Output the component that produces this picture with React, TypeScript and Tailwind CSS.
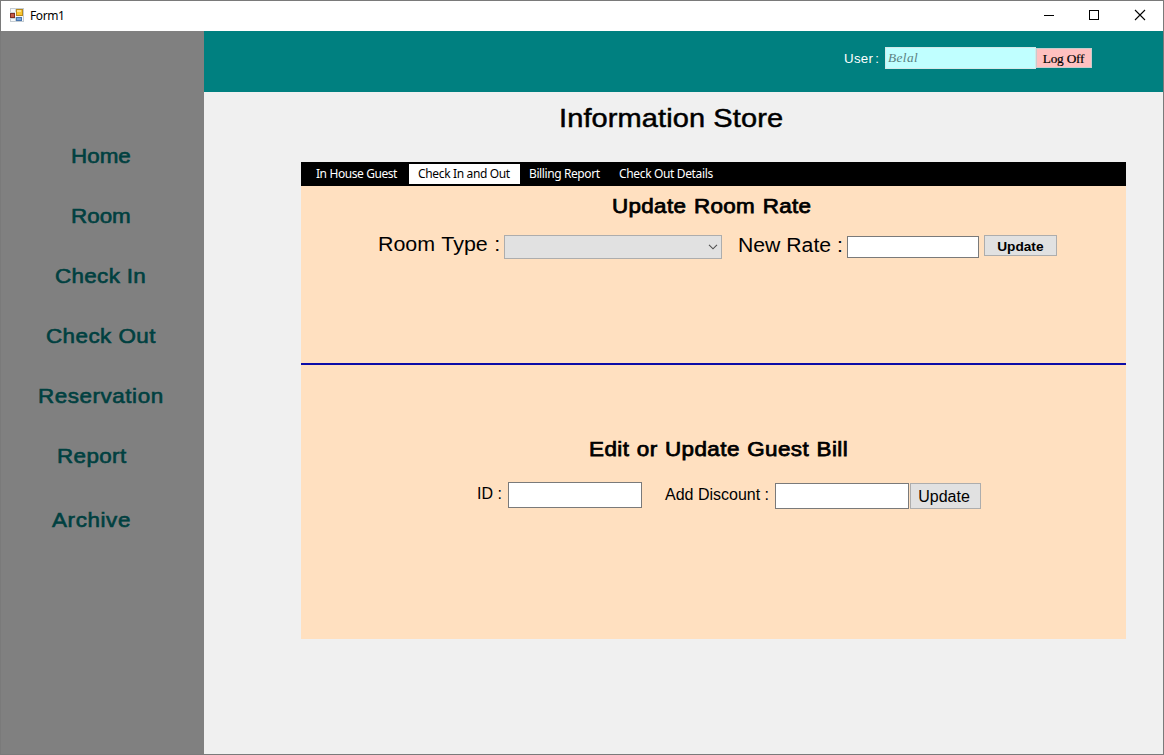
const nav: { label: string; cls: string }[] = [
  { label: "Home", cls: "ml-[70px] tracking-[0px]" },
  { label: "Room", cls: "ml-[70px] tracking-[0px]" },
  { label: "Check In", cls: "ml-[54px] tracking-[0.3px]" },
  { label: "Check Out", cls: "ml-[45px] tracking-[0.4px]" },
  { label: "Reservation", cls: "ml-[37px] tracking-[0.5px]" },
  { label: "Report", cls: "ml-[56px] tracking-[0.35px]" },
  { label: "Archive", cls: "ml-[51px] tracking-[0.55px]" },
];

function AppIcon() {
  return (
    <svg className="mt-[7px]" width="14" height="14" viewBox="0 0 14 14" shapeRendering="crispEdges">
      <rect x="0.5" y="0.5" width="13" height="13" fill="#f6f8fa" stroke="#c4ccd2" />
      <path d="M5.5 9V14M0 4.5H5M0 10.5H5M5.5 0V4" stroke="#ccd4da" />
      <rect x="0.5" y="5.5" width="4" height="4" fill="#c65a48" stroke="#7d2d24" />
      <rect x="6.5" y="1.5" width="6" height="6" fill="#f9c62f" stroke="#b98a1c" />
      <rect x="7" y="2" width="4" height="2" fill="#fde08a" />
      <rect x="6.5" y="9.5" width="5" height="3" fill="#7aa6d8" stroke="#4a76ae" />
    </svg>
  );
}

function TitleBar() {
  return (
    <div className="flex h-[30px] shrink-0 items-start bg-white pl-[9px]">
      <AppIcon />
      <span className="ml-[6px] mt-[7px] font-['Noto_Sans',sans-serif] text-[12px] leading-4 tracking-[-0.4px]">Form1</span>
      <svg className="ml-auto" width="138" height="30" viewBox="0 0 138 30" fill="none" stroke="#000">
        <path d="M19 14.5H29M64.5 9.5H73.5V18.5H64.5Z" shapeRendering="crispEdges" />
        <path d="M110 9L120 19M120 9L110 19" strokeWidth="1.1" />
      </svg>
    </div>
  );
}

function Sidebar() {
  return (
    <nav className="flex w-[203px] shrink-0 flex-col bg-[#808080] pt-[113px] text-[20px] leading-6 text-[#004040] [-webkit-text-stroke:0.6px_#004040]">
      {nav.map((n) => (
        <a key={n.label} className={"h-[60px] origin-left scale-x-[1.12] self-start whitespace-nowrap last:pt-1 " + n.cls}>
          {n.label}
        </a>
      ))}
    </nav>
  );
}

function Header() {
  return (
    <header className="flex h-[61px] items-start bg-[#008080] pl-[640px] pt-4">
      <span className="mt-1 w-[41px] whitespace-pre text-[13.3px] leading-4 tracking-[0.3px] text-white [word-spacing:-2px]">User :</span>
      <div className="h-[22px] w-[151px] border border-[#d5e8e8] bg-[#c0ffff] pl-[2px] font-['Liberation_Serif',serif] text-[13.3px] italic leading-[20px] tracking-[0.4px] text-[#5c7f7f]">
        Belal
      </div>
      <button className="mt-px h-5 w-14 border border-[#c8cccc] bg-[#ffc0c0] pr-px font-['Liberation_Serif',serif] text-[13.3px] leading-[19px] tracking-[-0.2px] [-webkit-text-stroke:0.2px_#000]">
        Log Off
      </button>
    </header>
  );
}

function Tabs() {
  return (
    <div className="flex h-6 items-center whitespace-nowrap bg-black pl-[6px] font-['Noto_Sans',sans-serif] text-[12px] leading-5 text-white">
      <span className="w-[102px] pl-[9px] tracking-[-0.5px] [word-spacing:0.5px]">In House Guest</span>
      <span className="h-5 w-[111px] bg-white pl-[9px] tracking-[-0.35px] text-black">Check In and Out</span>
      <span className="w-[90px] pl-[9px] tracking-[-0.4px]">Billing Report</span>
      <span className="pl-[9px] tracking-[-0.35px]">Check Out Details</span>
    </div>
  );
}

function RoomRate() {
  return (
    <section className="h-[179px] border-b-2 border-[#0c0ca8] pt-2">
      <h2 className="ml-[311px] w-fit origin-left scale-x-[1.12] text-[20px] leading-6 tracking-[0.3px] [-webkit-text-stroke:0.75px_#000] [word-spacing:1px]">
        Update Room Rate
      </h2>
      <div className="flex items-start whitespace-nowrap pl-[77px] pt-[14px] text-[20px] leading-6">
        <label className="w-[126px] origin-left scale-x-[1.07] [word-spacing:0.6px]">Room Type :</label>
        <div className="mt-[3px] flex h-6 w-[218px] items-center justify-end border border-[#adadad] bg-[#e1e1e1] pr-[3px]">
          <svg width="10" height="6" viewBox="0 0 10 6" fill="none" stroke="#505050" strokeWidth="1.1">
            <path d="M1 0.8L5 4.8L9 0.8" />
          </svg>
        </div>
        <label className="ml-4 mt-px w-[109px] origin-left scale-x-[1.06]">New Rate :</label>
        <input className="mt-1 h-[22px] w-[132px] border border-[#7a7a7a] bg-white" />
        <button className="ml-[5px] mt-[3px] flex h-[21px] w-[73px] justify-center border border-[#adadad] bg-[#e1e1e1] text-[12px] font-bold leading-[22px]">
          <span className="scale-x-[1.14]">Update</span>
        </button>
      </div>
    </section>
  );
}

function GuestBill() {
  return (
    <section className="pt-[72px]">
      <h2 className="ml-[288px] w-fit origin-left scale-x-[1.12] text-[20px] leading-6 tracking-[0.4px] [-webkit-text-stroke:0.75px_#000] [word-spacing:0.6px]">
        Edit or Update Guest Bill
      </h2>
      <div className="flex items-start whitespace-nowrap pl-[176px] pt-[21px] text-[16px] leading-6">
        <label className="w-[31px]">ID :</label>
        <input className="h-[26px] w-[134px] border border-[#7a7a7a] bg-white" />
        <label className="ml-[23px] mt-px w-[110px]">Add Discount :</label>
        <input className="mt-px h-[26px] w-[134px] border border-[#7a7a7a] bg-white" />
        <button className="ml-px mt-px h-[26px] w-[71px] border border-[#adadad] bg-[#e1e1e1] pr-[3px] leading-[26px]">Update</button>
      </div>
    </section>
  );
}

export default function App() {
  return (
    <div className="flex h-[755px] w-[1164px] flex-col overflow-hidden border border-[#7a7a7a] bg-[#f0f0f0] font-['Liberation_Sans',Arial,sans-serif] text-black">
      <TitleBar />
      <div className="flex min-h-0 flex-1">
        <Sidebar />
        <div className="flex-1">
          <Header />
          <main className="pl-[97px]">
            <h1 className="ml-[258px] w-fit origin-left scale-x-[1.09] pt-[10px] text-[26.6px] leading-8 tracking-[0.1px] [-webkit-text-stroke:0.5px_#000]">
              Information Store
            </h1>
            <div className="mt-[28px] h-[477px] w-[825px] bg-[#ffe0c0]">
              <Tabs />
              <RoomRate />
              <GuestBill />
            </div>
          </main>
        </div>
      </div>
    </div>
  );
}
